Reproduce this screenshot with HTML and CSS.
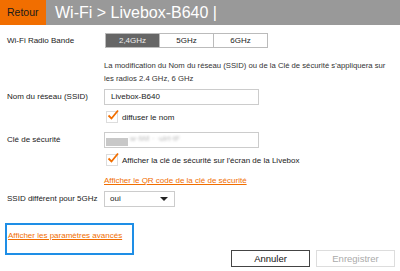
FILE: index.html
```html
<!DOCTYPE html>
<html lang="fr">

<head>
  <meta charset="UTF-8">
  <title>Wi-Fi</title>
  <link rel="stylesheet" href="styles.css">
</head>

<body>

  <div class="header">
    <div class="back">Retour</div>
    <h1 class="title">Wi-Fi &gt; Livebox-B640 |</h1>
  </div>

  <main class="form">

    <div class="row radio-row">
      <span class="label">Wi-Fi Radio Bande</span>
      <div class="bands">
        <span class="band active">2,4GHz</span>
        <span class="band">5GHz</span>
        <span class="band">6GHz</span>
      </div>
    </div>

    <p class="info">La modification du Nom du réseau (SSID) ou de la Clé de sécurité s'appliquera sur les radios 2.4 GHz, 6 GHz</p>

    <div class="row">
      <span class="label">Nom du réseau (SSID)</span>
      <div class="field">Livebox-B640</div>
    </div>

    <label class="check">
      <span class="box"><svg viewBox="0 0 12 12" width="12" height="12"><path d="M1.5 6.5 L4.5 9.5 L11 1.5" fill="none" stroke="#f16e00" stroke-width="1.8"/></svg></span>
      diffuser le nom
    </label>

    <div class="row key-row">
      <span class="label">Clé de sécurité</span>
      <div class="field key">
        <span class="blur-block"></span>
        <span class="blur-text">w·iWl · ·ulrt·tF</span>
      </div>
    </div>

    <label class="check">
      <span class="box"><svg viewBox="0 0 12 12" width="12" height="12"><path d="M1.5 6.5 L4.5 9.5 L11 1.5" fill="none" stroke="#f16e00" stroke-width="1.8"/></svg></span>
      Afficher la clé de sécurité sur l'écran de la Livebox
    </label>

    <a class="link qr" href="#">Afficher le QR code de la clé de sécurité</a>

    <div class="row">
      <span class="label">SSID différent pour 5GHz</span>
      <div class="select">oui <span class="arrow"></span></div>
    </div>

    <div class="bottom">
      <div class="advanced">
        <a class="link" href="#">Afficher les paramètres avancés</a>
      </div>
      <div class="buttons">
        <button class="btn">Annuler</button>
        <button class="btn disabled">Enregistrer</button>
      </div>
    </div>

  </main>

</body>

</html>
```

FILE: styles.css
```css
body {
  margin: 0;
  font-family: "Liberation Sans", Arial, sans-serif;
  font-size: 8px;
  color: #222;
  background: #fff;
}

.header {
  display: flex;
  height: 25px;
  background: #999;
}

.back {
  width: 46px;
  background: #f16e00;
  color: #1a1a1a;
  font-size: 10.5px;
  line-height: 25px;
  padding-left: 7px;
  box-sizing: border-box;
}

.title {
  margin: 0 0 0 9px;
  font-size: 16px;
  font-weight: normal;
  color: #fff;
  line-height: 25px;
}

.form {
  padding: 8px 5px 0 7px;
}

.row {
  display: grid;
  grid-template-columns: 97px 1fr;
  align-items: center;
  line-height: 10px;
}

.bands {
  display: flex;
  margin-left: 1px;
  width: 163px;
  height: 15px;
  border: 1px solid #bbb;
  box-sizing: border-box;
}

.band {
  flex: 1;
  text-align: center;
  line-height: 13px;
  color: #222;
  border-left: 1px solid #bbb;
}

.band:first-child {
  border-left: none;
}

.band.active {
  background: #666;
  color: #eee;
}

.info {
  margin: 11px 4px 4px 97px;
  font-size: 7.7px;
  line-height: 13px;
  color: #333;
}

.field {
  width: 155px;
  height: 16px;
  border: 1px solid #ccc;
  box-sizing: border-box;
  padding-left: 6px;
  line-height: 14px;
  color: #222;
}

.check {
  display: flex;
  align-items: center;
  gap: 4px;
  margin: 6px 0 0 99px;
  height: 12px;
}

.box {
  width: 10px;
  height: 10px;
  border: 1px solid #ddd;
  position: relative;
}

.box svg {
  position: absolute;
  left: 0;
  top: -3px;
}

.key-row {
  margin-top: 9px;
}

.key {
  display: flex;
  align-items: center;
  padding-left: 1px;
}

.blur-block {
  width: 22px;
  height: 8px;
  margin-top: 4px;
  background: #c8c8c8;
  filter: blur(0.6px);
}

.blur-text {
  color: #bbb;
  filter: blur(0.8px);
  margin-left: 2px;
  margin-top: -3px;
}

.link {
  color: #f16e00;
  text-decoration: underline;
}

.qr {
  display: block;
  line-height: 10px;
  margin: 10px 0 5px 97px;
}

.select {
  position: relative;
  width: 71px;
  height: 16px;
  border: 1px solid #ccc;
  box-sizing: border-box;
  padding-left: 5px;
  line-height: 14px;
  color: #222;
}

.arrow {
  position: absolute;
  right: 6px;
  top: 5px;
  border-left: 4px solid transparent;
  border-right: 4px solid transparent;
  border-top: 4px solid #222;
}

.bottom {
  display: flex;
  justify-content: space-between;
  align-items: flex-start;
  margin-top: 16px;
}

.advanced {
  width: 129px;
  height: 32px;
  margin-left: -2px;
  border: 2px solid #1e8ee6;
  box-sizing: border-box;
  padding: 6px 0 0 1px;
}

.buttons {
  display: flex;
  gap: 6px;
  margin-top: 27px;
}

.btn {
  width: 79px;
  height: 17px;
  font-family: inherit;
  font-size: 9.5px;
  background: #fff;
  border: 1px solid #444;
  color: #111;
  padding: 0;
}

.btn.disabled {
  border-color: #ddd;
  color: #aaa;
}
```
